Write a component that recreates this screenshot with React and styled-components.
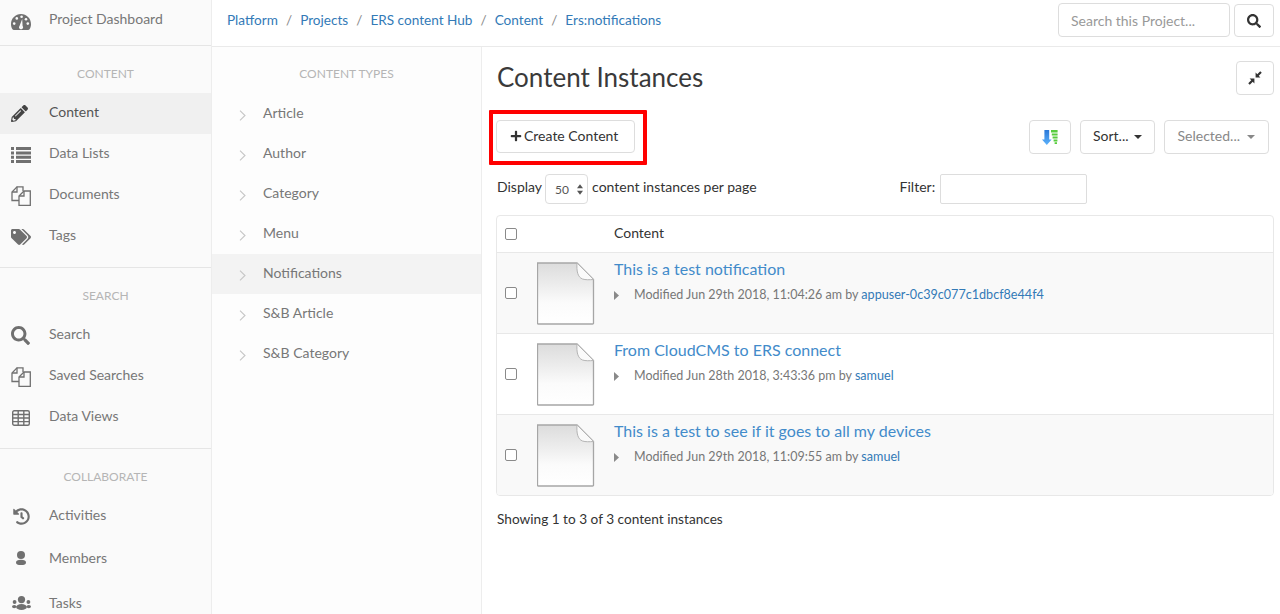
import React from "react";
import styled, { createGlobalStyle } from "styled-components";
import {
  FaPencilAlt,
  FaTags,
  FaSearch,
  FaHistory,
  FaPlus,
} from "react-icons/fa";

const GlobalStyle = createGlobalStyle`
  html, body {
    margin: 0;
    padding: 0;
    height: 614px;
    overflow: hidden;
    background: #fff;
    font-family: Lato, "Open Sans", Arial, sans-serif;
    font-size: 14px;
    color: #333;
  }
  * { box-sizing: border-box; }
`;

const GaugeIcon = () => (
  <svg width="20" height="16" viewBox="0 0 20 16">
    <path d="M10 0 C4.5 0 0 4.4 0 10 C0 12 .5 13.6 1.3 15 Q1.8 16 3 16 H17 Q18.2 16 18.7 15 C19.5 13.6 20 12 20 10 C20 4.4 15.5 0 10 0 Z" fill="#707070" />
    <circle cx="5.8" cy="4.4" r="1.3" fill="#fafafa" />
    <circle cx="10.6" cy="2.8" r="1.3" fill="#fafafa" />
    <circle cx="15" cy="5.2" r="1.3" fill="#fafafa" />
    <circle cx="3.2" cy="9.6" r="1.3" fill="#fafafa" />
    <circle cx="16.8" cy="9.6" r="1.3" fill="#fafafa" />
    <path d="M11.2 5 L11.6 12 A2 2 0 1 1 8.5 12 Z" fill="#fafafa" />
  </svg>
);

const ListIcon = () => (
  <svg width="20" height="16" viewBox="0 0 20 16" fill="#707070">
    <path d="M0 0 H3 V3 H0 Z M5 0 H20 V3 H5 Z M0 4.4 H3 V7.4 H0 Z M5 4.4 H20 V7.4 H5 Z M0 8.8 H3 V11.8 H0 Z M5 8.8 H20 V11.8 H5 Z M0 13 H3 V16 H0 Z M5 13 H20 V16 H5 Z" />
  </svg>
);

const PagesIcon = () => (
  <svg width="20" height="20" viewBox="0 0 20 20" fill="none" stroke="#707070" strokeWidth="1.3">
    <path d="M8 14.5 H1 V6 L6 .8 H12 V5" />
    <path d="M6 .8 V6 H1" />
    <path d="M8 19.3 H19.3 V5 H13 L8 10 Z" fill="#fafafa" />
    <path d="M13 5 V10 H8" />
  </svg>
);

const GridIcon = () => (
  <svg width="18" height="16" viewBox="0 0 18 16" fill="none" stroke="#707070" strokeWidth="1.4">
    <rect x=".7" y=".7" width="16.6" height="14.6" rx="1.5" />
    <path d="M.7 4.5 H17.3 M.7 8 H17.3 M.7 11.6 H17.3 M6.2 .7 V15.3 M11.8 .7 V15.3" />
  </svg>
);

const MemberIcon = () => (
  <svg width="10" height="14" viewBox="0 0 10 14" fill="#707070">
    <circle cx="5" cy="4" r="4" />
    <ellipse cx="5" cy="11.4" rx="5" ry="2.6" />
  </svg>
);

const GroupIcon = () => (
  <svg width="19" height="14" viewBox="0 0 19 14" fill="#707070">
    <circle cx="9.5" cy="3.6" r="3.6" />
    <ellipse cx="9.5" cy="11" rx="5.4" ry="3" />
    <circle cx="2.6" cy="6" r="1.9" />
    <ellipse cx="2.2" cy="10.6" rx="2.2" ry="1.7" />
    <circle cx="16.4" cy="6" r="1.9" />
    <ellipse cx="16.8" cy="10.6" rx="2.2" ry="1.7" />
  </svg>
);

const CompressIcon = () => (
  <svg width="14" height="14" viewBox="0 0 14 14" fill="#333">
    <path d="M7.6 6.4 V1.6 L12.4 6.4 Z M6.4 7.6 V12.4 L1.6 7.6 Z" />
    <path d="M9.5 4.5 L13 1 M4.5 9.5 L1 13" stroke="#333" strokeWidth="2.2" />
  </svg>
);

const ChevronIcon = () => (
  <svg width="7" height="11" viewBox="0 0 7 11" fill="none" stroke="#c6c6c6" strokeWidth="1.1">
    <path d="M1 .6 L6 5.5 L1 10.4" />
  </svg>
);

const CaretIcon = () => (
  <svg width="5" height="9" viewBox="0 0 5 9" fill="#8a8a8a">
    <path d="M0 0 L5 4.5 L0 9 Z" />
  </svg>
);

const NAV = [
  {
    title: "CONTENT",
    items: [
      { label: "Content", icon: <FaPencilAlt size={17} />, active: true },
      { label: "Data Lists", icon: <ListIcon /> },
      { label: "Documents", icon: <PagesIcon /> },
      { label: "Tags", icon: <FaTags size={20} /> },
    ],
  },
  {
    title: "SEARCH",
    items: [
      { label: "Search", icon: <FaSearch size={19} /> },
      { label: "Saved Searches", icon: <PagesIcon /> },
      { label: "Data Views", icon: <GridIcon />, nudge: 1 },
    ],
  },
  {
    title: "COLLABORATE",
    items: [
      { label: "Activities", icon: <FaHistory size={17} />, nudge: 2 },
      { label: "Members", icon: <MemberIcon />, height: 45, nudge: 5, lift: true },
      { label: "Tasks", icon: <GroupIcon />, height: 45, nudge: 1, lift: true },
    ],
  },
];

const TYPES = ["Article", "Author", "Category", "Menu", "Notifications", "S&B Article", "S&B Category"];
const CRUMBS = ["Platform", "Projects", "ERS content Hub", "Content", "Ers:notifications"];

const ROWS = [
  { title: "This is a test notification", date: "Jun 29th 2018, 11:04:26 am", user: "appuser-0c39c077c1dbcf8e44f4", shaded: true },
  { title: "From CloudCMS to ERS connect", date: "Jun 28th 2018, 3:43:36 pm", user: "samuel" },
  { title: "This is a test to see if it goes to all my devices", date: "Jun 29th 2018, 11:09:55 am", user: "samuel", shaded: true },
];

const DocIcon = ({ id }) => (
  <svg width="58" height="63" viewBox="0.5 0 58 63">
    <defs>
      <linearGradient id={id} x1="0" y1="0" x2="0" y2="1">
        <stop offset="0" stopColor="#dcdcdc" />
        <stop offset="0.35" stopColor="#ececec" />
        <stop offset="0.65" stopColor="#fbfbfb" />
        <stop offset="1" stopColor="#ffffff" />
      </linearGradient>
    </defs>
    <path d="M1 1 H40.5 L57 17.5 V61.5 Q57 62 56 62 H1.6 Q1 62 1 61.5 Z" fill={`url(#${id})`} stroke="#a6a6a6" strokeWidth="1.3" />
    <path d="M40.5 1 C40 9 41 15 46 17 C49 18 53 17.8 57 17.5 Z" fill="#fafafa" stroke="#b4b4b4" strokeWidth="1" />
  </svg>
);

const DownloadIcon = () => (
  <svg width="16" height="15" viewBox="0 0 16 15">
    <defs>
      <linearGradient id="dl-blue" x1="0" y1="0" x2="0" y2="1">
        <stop offset="0" stopColor="#2a78d8" />
        <stop offset="1" stopColor="#5cb2fb" />
      </linearGradient>
    </defs>
    <path d="M2.4 0 H7.2 V9.5 H9.6 L4.8 15 L0 9.5 H2.4 Z" fill="url(#dl-blue)" />
    <path d="M9 0 H15.6 V2.4 H9 Z M9.8 3.4 H15.6 V5.6 H9.8 Z M10.6 6.6 H15.6 V8.6 H10.6 Z M11.6 9.6 H15.4 V11.4 H11.6 Z M12.6 12.3 H15 V14 H12.6 Z" fill="#58cc3e" />
  </svg>
);

const App = () => (
  <>
    <GlobalStyle />
    <Page>
      <Sidebar>
        <DashRow>
          <NavIcon><GaugeIcon /></NavIcon>
          <DashLabel>Project Dashboard</DashLabel>
        </DashRow>
        {NAV.map((group) => (
          <NavGroup key={group.title}>
            <NavTitle>{group.title}</NavTitle>
            {group.items.map(({ label, icon, active, height, nudge, lift }) => (
              <NavItem key={label} $active={active} $height={height}>
                <NavIcon $nudge={nudge} $lift={lift}>{icon}</NavIcon>
                <NavLabel>{label}</NavLabel>
              </NavItem>
            ))}
          </NavGroup>
        ))}
      </Sidebar>
      <Body>
        <TopBar>
          <Crumbs>
            {CRUMBS.map((c, i) => (
              <React.Fragment key={c}>
                {i > 0 && <CrumbSep>/</CrumbSep>}
                <Link>{c}</Link>
              </React.Fragment>
            ))}
          </Crumbs>
          <SearchInput placeholder="Search this Project..." />
          <SearchButton><FaSearch size={14} /></SearchButton>
        </TopBar>
        <Columns>
          <TypesPanel>
            <TypesTitle>CONTENT TYPES</TypesTitle>
            {TYPES.map((t) => (
              <TypeItem key={t} $active={t === "Notifications"}>
                <Chevron><ChevronIcon /></Chevron>
                <NavLabel>{t}</NavLabel>
              </TypeItem>
            ))}
          </TypesPanel>
          <Main>
            <TitleRow>
              <Title>Content Instances</Title>
              <CollapseButton><CompressIcon /></CollapseButton>
            </TitleRow>
            <Toolbar>
              <Highlight>
                <CreateButton><FaPlus size={12} /> Create Content</CreateButton>
              </Highlight>
              <ToolGroup>
                <IconButton><DownloadIcon /></IconButton>
                <MenuButton>Sort... <Caret /></MenuButton>
                <MenuButton $disabled>Selected... <Caret $disabled /></MenuButton>
              </ToolGroup>
            </Toolbar>
            <ControlRow>
              Display
              <PageSize>
                50
                <Spinner>
                  <svg width="6" height="11" viewBox="0 0 7 12">
                    <path d="M3.5 0 L7 4.5 H0 Z M3.5 12 L0 7.5 H7 Z" fill="#555" />
                  </svg>
                </Spinner>
              </PageSize>
              content instances per page
              <FilterLabel>Filter:</FilterLabel>
              <FilterInput />
            </ControlRow>
            <Table>
              <HeadRow>
                <Check />
                <span />
                <HeadLabel>Content</HeadLabel>
              </HeadRow>
              {ROWS.map((row, i) => (
                <Row key={row.title} $shaded={row.shaded}>
                  <Check />
                  <DocIcon id={`doc-${i}`} />
                  <RowText>
                    <RowTitle>{row.title}</RowTitle>
                    <RowMeta>
                      <MetaArrow><CaretIcon /></MetaArrow>
                      Modified {row.date} by&nbsp;<MetaLink>{row.user}</MetaLink>
                    </RowMeta>
                  </RowText>
                </Row>
              ))}
            </Table>
            <Summary>Showing 1 to 3 of 3 content instances</Summary>
          </Main>
        </Columns>
      </Body>
    </Page>
  </>
);

export default App;

const Page = styled.div`
  display: flex;
  height: 614px;
  overflow: hidden;
`;

const Sidebar = styled.aside`
  width: 212px;
  flex: none;
  background: #fafafa;
  border-right: 1px solid #ededed;
  color: #777;
`;

const NavIcon = styled.span`
  width: 49px;
  padding-left: ${(p) => 11 + (p.$nudge || 0)}px;
  padding-bottom: ${(p) => (p.$lift ? "3px" : "0")};
  display: flex;
  align-items: center;
  color: #6f6f6f;
`;

const NavLabel = styled.span`
  margin-bottom: 4px;
`;

const DashLabel = styled(NavLabel)`
  margin-bottom: 7px;
`;

const DashRow = styled.div`
  height: 46px;
  padding-bottom: 2px;
  display: flex;
  align-items: center;
  border-bottom: 1px solid #e5e5e5;
`;

const NavGroup = styled.div`
  padding: 20px 0 10px;
  border-bottom: 1px solid #e5e5e5;
  &:last-child { border-bottom: 0; }
`;

const NavTitle = styled.div`
  height: 17px;
  line-height: 15px;
  margin-bottom: 10px;
  text-align: center;
  font-size: 12px;
  color: #b5b5b5;
`;

const NavItem = styled.div`
  height: ${(p) => p.$height || 41}px;
  display: flex;
  align-items: center;
  background: ${(p) => (p.$active ? "#f0f0f0" : "transparent")};
  color: ${(p) => (p.$active ? "#555" : "#777")};
  ${NavIcon} { color: ${(p) => (p.$active ? "#444" : "#6f6f6f")}; }
`;

const Body = styled.div`
  flex: 1;
  min-width: 0;
  display: flex;
  flex-direction: column;
`;

const TopBar = styled.header`
  height: 47px;
  flex: none;
  display: flex;
  align-items: flex-start;
  padding: 3px 6px 0 15px;
  border-bottom: 1px solid #eaeaea;
`;

const Crumbs = styled.nav`
  flex: 1;
  height: 34px;
  padding-bottom: 1px;
  display: flex;
  align-items: center;
  font-size: 13.6px;
`;

const CrumbSep = styled.span`
  margin: 0 8px;
  color: #888;
`;

const Link = styled.span`
  color: #337ab7;
`;

const SearchInput = styled.input`
  width: 172px;
  height: 34px;
  padding: 0 12px;
  border: 1px solid #ddd;
  border-radius: 4px;
  font: inherit;
  &::placeholder { color: #999; }
`;

const Button = styled.button`
  height: 33px;
  padding: 0 12px;
  display: inline-flex;
  align-items: center;
  justify-content: center;
  gap: 4px;
  border: 1px solid #ddd;
  border-radius: 4px;
  background: #fff;
  color: #333;
  font: inherit;
`;

const CreateButton = styled(Button)`
  padding: 0 16px 2px 13px;
  gap: 2px;
`;

const SearchButton = styled(Button)`
  width: 40px;
  margin: 1px 0 0 4px;
  padding: 0;
`;

const Columns = styled.div`
  flex: 1;
  display: flex;
  min-height: 0;
`;

const TypesPanel = styled.div`
  width: 270px;
  flex: none;
  padding-top: 19px;
  background: #fdfdfd;
  border-right: 1px solid #ededed;
  color: #777;
`;

const TypesTitle = styled.div`
  height: 17px;
  line-height: 15px;
  margin-bottom: 11px;
  text-align: center;
  font-size: 12px;
  color: #b5b5b5;
`;

const TypeItem = styled.div`
  height: 40px;
  display: flex;
  align-items: center;
  padding-left: 27px;
  background: ${(p) => (p.$active ? "#f3f3f3" : "transparent")};
`;

const Chevron = styled.span`
  width: 24px;
  display: flex;
  padding-top: 2px;
`;

const Main = styled.main`
  flex: 1;
  min-width: 0;
  padding: 13px 6px 0 15px;
`;

const TitleRow = styled.div`
  height: 51px;
  display: flex;
  justify-content: space-between;
  align-items: flex-start;
`;

const Title = styled.h1`
  margin: 0;
  font-size: 26px;
  line-height: 34px;
  font-weight: 400;
  color: #3a3a3a;
`;

const CollapseButton = styled(Button)`
  width: 38px;
  height: 34px;
  margin-top: 1px;
  padding: 0;
`;

const Toolbar = styled.div`
  display: flex;
  justify-content: space-between;
  align-items: flex-start;
`;

const Highlight = styled.div`
  margin: -1px 0 0 -8px;
  padding: 6px 8px 8px 3px;
  border: 4px solid #f00;
  border-radius: 1px;
`;

const ToolGroup = styled.div`
  display: flex;
  gap: 9px;
  margin: 9px 5px 0 0;
`;

const IconButton = styled(Button)`
  width: 42px;
  height: 34px;
  padding: 0;
`;

const MenuButton = styled(Button)`
  height: 34px;
  gap: ${(p) => (p.$disabled ? "7px" : "5px")};
  padding: 0 ${(p) => (p.$disabled ? "13px" : "12px")} 3px;
  color: ${(p) => (p.$disabled ? "#888" : "#333")};
`;

const Caret = styled.span`
  width: 0;
  height: 0;
  margin-top: 3px;
  border-left: 4px solid transparent;
  border-right: 4px solid transparent;
  border-top: 4px solid ${(p) => (p.$disabled ? "#888" : "#333")};
`;

const ControlRow = styled.div`
  height: 30px;
  margin-top: 9px;
  padding-bottom: 6px;
  display: flex;
  align-items: center;
`;

const PageSize = styled.div`
  align-self: flex-start;
  width: 43px;
  height: 30px;
  margin: 0 4px 0 3px;
  padding: 0 4px 0 9px;
  display: flex;
  align-items: center;
  justify-content: space-between;
  border: 1px solid #ddd;
  border-radius: 4px;
  font-size: 12px;
  color: #555;
`;

const Spinner = styled.span`
  display: flex;
`;

const FilterLabel = styled.span`
  margin-left: 143px;
`;

const FilterInput = styled.input`
  align-self: flex-start;
  width: 147px;
  height: 30px;
  margin-left: 5px;
  border: 1px solid #ddd;
  border-radius: 2px;
`;

const Table = styled.div`
  margin: 11px 0 0 -1px;
  border: 1px solid #e8e8e8;
  border-radius: 4px;
  overflow: hidden;
`;

const HeadRow = styled.div`
  height: 36px;
  display: grid;
  grid-template-columns: 40px 77px 1fr;
  align-items: center;
`;

const HeadLabel = styled.span`
  padding-bottom: 3px;
`;

const Row = styled.div`
  height: 81px;
  display: grid;
  grid-template-columns: 40px 77px 1fr;
  align-items: center;
  border-top: 1px solid #e8e8e8;
  background: ${(p) => (p.$shaded ? "#f9f9f9" : "#fff")};
`;

const Check = styled.span`
  width: 12px;
  height: 12px;
  margin-left: 8px;
  background: #fff;
  border: 1px solid #8a8a8a;
  border-radius: 2px;
`;

const RowText = styled.div`
  align-self: start;
  padding-top: 5px;
`;

const RowTitle = styled.div`
  font-size: 16px;
  line-height: 22px;
  color: #428bca;
`;

const RowMeta = styled.div`
  margin-top: 6px;
  display: flex;
  align-items: center;
  font-size: 12.5px;
  line-height: 18px;
  color: #777;
`;

const MetaLink = styled(Link)`
  font-size: 12.6px;
`;

const MetaArrow = styled.span`
  width: 20px;
  display: flex;
`;

const Summary = styled.p`
  margin: 13px 0 0;
  line-height: 20px;
  font-size: 13.65px;
`;
